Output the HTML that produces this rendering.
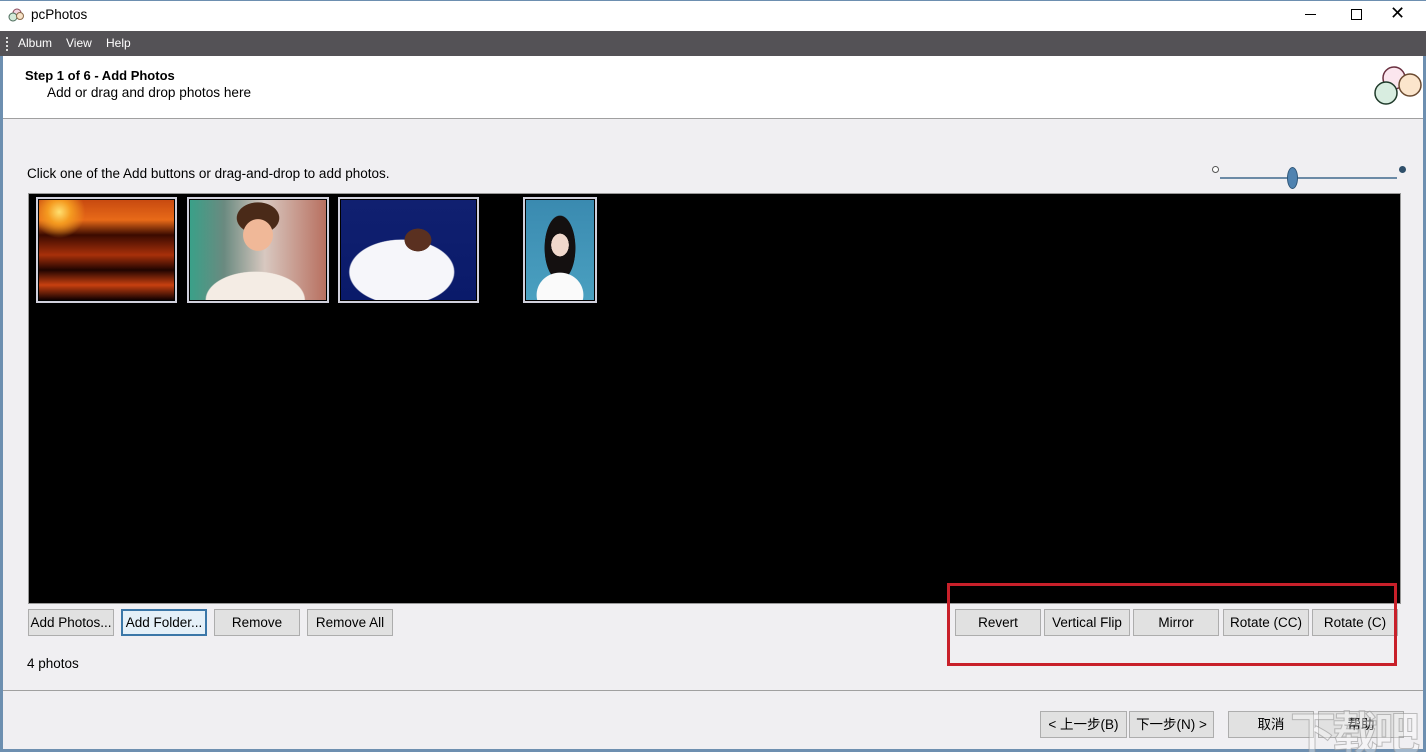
<!DOCTYPE html>
<html><head><meta charset="utf-8"><style>
*{margin:0;padding:0;box-sizing:border-box}
html,body{width:1426px;height:752px;overflow:hidden}
body{position:relative;background:#f0eff2;font-family:"Liberation Sans","Noto Sans CJK SC",sans-serif;font-size:13.5px;color:#000}
.a{position:absolute}
.btn{position:absolute;height:27px;background:#e1e1e1;border:1px solid #adadad;text-align:center;line-height:25px;font-size:13.5px}
.th{position:absolute;border:2px solid #d0d0dc;background:#000;padding:1px}
.th div{width:100%;height:100%}
</style></head><body>
<div class="a" style="left:0;top:0;width:1426px;height:31px;background:#fff;border-top:1px solid #6d8fb0"></div>
<svg class="a" style="left:8px;top:8px" width="16" height="14"><circle cx="9" cy="5" r="4" fill="#f2d3de" stroke="#8a4a5a"/><circle cx="5" cy="9" r="4" fill="#d3ead9" stroke="#4a6a5a"/><circle cx="12" cy="8" r="3.5" fill="#f7e2c8" stroke="#8a6a4a"/></svg>
<div class="a" style="left:31px;top:7px;font-size:13.5px">pcPhotos</div>
<div class="a" style="left:1305px;top:14px;width:11px;height:1px;background:#000"></div>
<div class="a" style="left:1351px;top:9px;width:11px;height:11px;border:1px solid #000"></div>
<div class="a" style="left:1390px;top:3px;font-size:18px">✕</div>
<div class="a" style="left:0;top:31px;width:1426px;height:25px;background:#545256"></div>
<div class="a" style="left:6px;top:37px;width:2px;height:14px;border-left:2px dotted #ddd"></div>
<div class="a" style="left:18px;top:36px;color:#fff;font-size:12px">Album</div>
<div class="a" style="left:66px;top:36px;color:#fff;font-size:12px">View</div>
<div class="a" style="left:106px;top:36px;color:#fff;font-size:12px">Help</div>
<div class="a" style="left:3px;top:56px;width:1420px;height:63px;background:#fff;border-bottom:1px solid #a0a0a0"></div>
<div class="a" style="left:25px;top:68px;font-weight:bold;font-size:13px">Step 1 of 6 - Add Photos</div>
<div class="a" style="left:47px;top:85px;font-size:13.6px">Add or drag and drop photos here</div>
<svg class="a" style="left:1371px;top:64px" width="52" height="44"><circle cx="23" cy="14" r="11" fill="#fbe6ee" stroke="#6a3040" stroke-width="1.5"/><circle cx="39" cy="21" r="11" fill="#fbe5cc" stroke="#6a4a30" stroke-width="1.5"/><circle cx="15" cy="29" r="11" fill="#d8ede0" stroke="#1f3a2a" stroke-width="1.5"/></svg>
<div class="a" style="left:0;top:56px;width:3px;height:696px;background:#6d8fb0"></div>
<div class="a" style="left:1423px;top:56px;width:3px;height:696px;background:#6d8fb0"></div>
<div class="a" style="left:0;top:749px;width:1426px;height:3px;background:#6d8fb0"></div>
<div class="a" style="left:27px;top:166px">Click one of the Add buttons or drag-and-drop to add photos.</div>
<div class="a" style="left:1212px;top:166px;width:7px;height:7px;border:1px solid #555;border-radius:50%;background:#fff"></div>
<div class="a" style="left:1399px;top:166px;width:7px;height:7px;border-radius:50%;background:#2f4f6a"></div>
<div class="a" style="left:1220px;top:177px;width:177px;height:2px;background:#6b8aa6"></div>
<div class="a" style="left:1287px;top:167px;width:11px;height:22px;border-radius:50%;background:#4f82b0;border:1px solid #2e5577"></div>
<div class="a" style="left:28px;top:193px;width:1373px;height:411px;background:#000;border:1px solid #999"></div>
<div class="th" style="left:36px;top:197px;width:141px;height:106px"><div style="background:radial-gradient(circle at 15% 12%,#ffe070 0,#f59b20 8%,transparent 18%),linear-gradient(#c84a10 0%,#e86a18 20%,#3a0a00 35%,#a8300a 55%,#200400 70%,#c84010 85%,#100000 100%)"></div></div>
<div class="th" style="left:187px;top:197px;width:142px;height:106px"><div style="background:radial-gradient(ellipse 18% 26% at 50% 35%,#f0b898 60%,transparent 62%),radial-gradient(ellipse 22% 22% at 50% 18%,#4a2a18 70%,transparent 72%),radial-gradient(ellipse 45% 35% at 48% 100%,#f4ece4 80%,transparent 82%),linear-gradient(90deg,#3aa088 0%,#6a8a80 25%,#d8c8c0 55%,#b87060 100%)"></div></div>
<div class="th" style="left:338px;top:197px;width:141px;height:106px"><div style="background:radial-gradient(ellipse 14% 16% at 57% 40%,#5a3020 70%,transparent 72%),radial-gradient(ellipse 48% 40% at 45% 72%,#f6f6fa 80%,transparent 82%),linear-gradient(#102070,#0a1a6a)"></div></div>
<div class="th" style="left:523px;top:197px;width:74px;height:106px"><div style="background:radial-gradient(ellipse 40% 26% at 50% 95%,#fafafa 85%,transparent 87%),radial-gradient(ellipse 16% 14% at 50% 45%,#f0d8cc 80%,transparent 82%),radial-gradient(ellipse 28% 40% at 50% 48%,#141010 80%,transparent 82%),linear-gradient(#3a8ab0,#4aa0c0)"></div></div>
<div class="btn" style="left:28px;top:609px;width:86px">Add Photos...</div>
<div class="btn" style="left:121px;top:609px;width:86px;border:2px solid #3b77a8;line-height:23px;background:#e5f0f8">Add Folder...</div>
<div class="btn" style="left:214px;top:609px;width:86px">Remove</div>
<div class="btn" style="left:307px;top:609px;width:86px">Remove All</div>
<div class="btn" style="left:955px;top:609px;width:86px">Revert</div>
<div class="btn" style="left:1044px;top:609px;width:86px">Vertical Flip</div>
<div class="btn" style="left:1133px;top:609px;width:86px">Mirror</div>
<div class="btn" style="left:1223px;top:609px;width:86px">Rotate (CC)</div>
<div class="btn" style="left:1312px;top:609px;width:86px">Rotate (C)</div>
<div class="a" style="left:947px;top:583px;width:450px;height:83px;border:3px solid #c8202a"></div>
<div class="a" style="left:27px;top:656px">4 photos</div>
<div class="a" style="left:3px;top:690px;width:1420px;height:1px;background:#a0a0a0"></div>
<div class="btn" style="left:1040px;top:711px;width:87px">&lt; 上一步(B)</div>
<div class="btn" style="left:1129px;top:711px;width:85px">下一步(N) &gt;</div>
<div class="btn" style="left:1228px;top:711px;width:86px">取消</div>
<div class="btn" style="left:1318px;top:711px;width:86px">帮助</div>
<div class="a" style="left:1290px;top:698px;font-size:46px;font-weight:bold;color:rgba(255,255,255,0.35);-webkit-text-stroke:1px rgba(150,150,150,0.6);letter-spacing:-4px">下载吧</div>
</body></html>
